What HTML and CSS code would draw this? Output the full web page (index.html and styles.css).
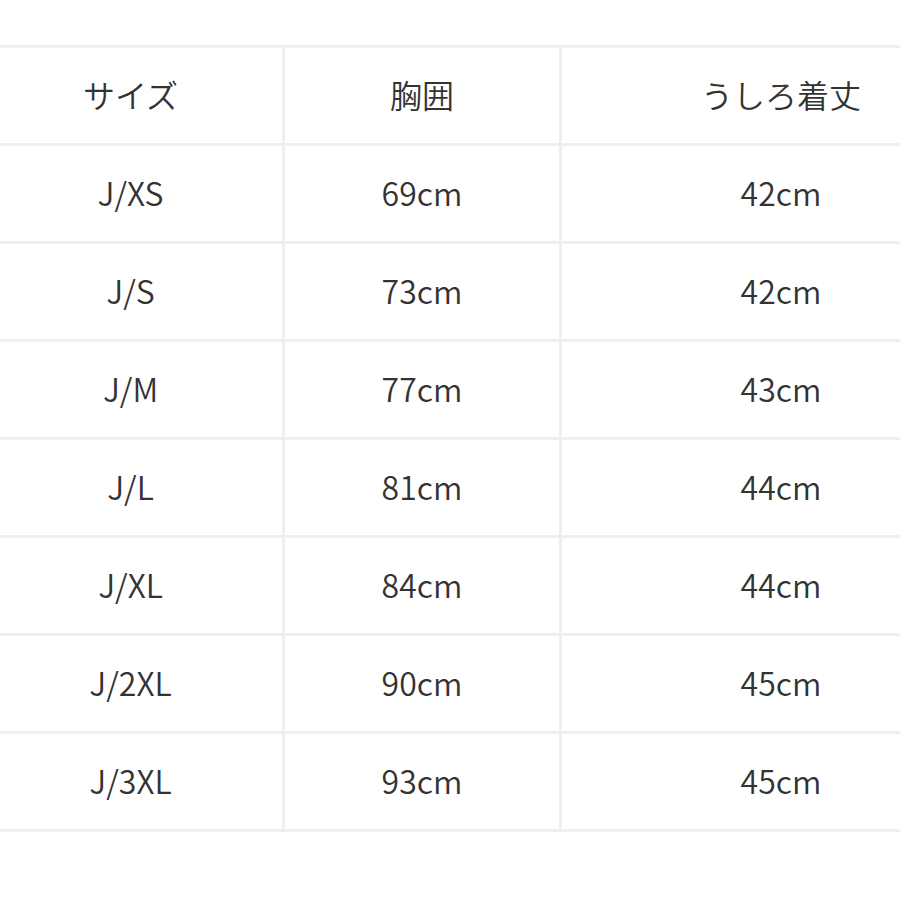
FILE: index.html
```html
<!DOCTYPE html>
<html lang="ja">
<head>
<meta charset="utf-8">
<title>サイズ表</title>
<link rel="stylesheet" href="styles.css">
</head>
<body>
<div class="page">
  <div class="size-table">
    <div class="cell col-size head">サイズ</div>
    <div class="cell col-chest head">胸囲</div>
    <div class="cell col-length head">うしろ着丈</div>

    <div class="cell col-size">J/XS</div>
    <div class="cell col-chest">69cm</div>
    <div class="cell col-length">42cm</div>

    <div class="cell col-size">J/S</div>
    <div class="cell col-chest">73cm</div>
    <div class="cell col-length">42cm</div>

    <div class="cell col-size">J/M</div>
    <div class="cell col-chest">77cm</div>
    <div class="cell col-length">43cm</div>

    <div class="cell col-size">J/L</div>
    <div class="cell col-chest">81cm</div>
    <div class="cell col-length">44cm</div>

    <div class="cell col-size">J/XL</div>
    <div class="cell col-chest">84cm</div>
    <div class="cell col-length">44cm</div>

    <div class="cell col-size">J/2XL</div>
    <div class="cell col-chest">90cm</div>
    <div class="cell col-length">45cm</div>

    <div class="cell col-size">J/3XL</div>
    <div class="cell col-chest">93cm</div>
    <div class="cell col-length">45cm</div>
  </div>
</div>
</body>
</html>
```
FILE: styles.css
```css
html, body {
  margin: 0;
  padding: 0;
  background: #ffffff;
}

body {
  width: 900px;
  height: 900px;
  overflow: hidden;
  font-family: "Noto Sans CJK JP", "Noto Sans", sans-serif;
  color: #333333;
}

.page {
  padding-top: 45px;
}

.size-table {
  display: grid;
  grid-template-columns: 282px 274px 338px;
  grid-auto-rows: 95px;
  gap: 3px;
  padding: 3px 0;
  width: 900px;
  box-sizing: border-box;
  background: #efefef;
}

.cell {
  background: #ffffff;
  display: flex;
  align-items: center;
  justify-content: center;
  font-size: 32px;
  font-weight: 350;
  line-height: 1;
  padding-bottom: 4px;
  box-sizing: border-box;
}

.col-size {
  padding-right: 21px;
}

.col-length {
  padding-left: 100px;
}
```
